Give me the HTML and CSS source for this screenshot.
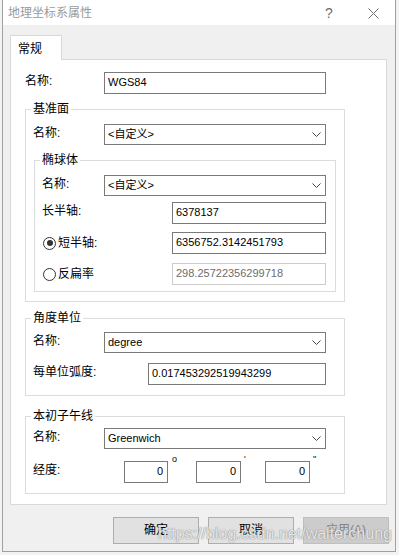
FILE: index.html
```html
<!DOCTYPE html>
<html lang="zh-CN">
<head>
    <meta charset="UTF-8">
    <title>地理坐标系属性</title>
    <link rel="stylesheet" href="styles.css">
</head>
<body>
    <div class="dialog">
        <!-- Title bar -->
        <div class="titlebar">
            <span class="title">地理坐标系属性</span>
            <span class="help">?</span>
            <span class="close">
                <svg width="11" height="11" viewBox="0 0 11 11"><path d="M0.5 0.5 L10.5 10.5 M10.5 0.5 L0.5 10.5" stroke="#6e6e6e" stroke-width="1" fill="none"/></svg>
            </span>
        </div>

        <div class="content">
            <div class="tabs">
                <div class="tab">常规</div>
            </div>

            <div class="page">
                <div class="row name-row">
                    <span class="lbl">名称:</span>
                    <div class="textbox wide">WGS84</div>
                </div>

                <!-- 基准面 -->
                <fieldset class="group datum">
                    <legend>基准面</legend>
                    <div class="row">
                        <span class="lbl">名称:</span>
                        <div class="combo"><span>&lt;自定义&gt;</span><svg width="9" height="5" viewBox="0 0 9 5"><path d="M0.5 0.5 L4.5 4.5 L8.5 0.5" stroke="#444" fill="none"/></svg></div>
                    </div>

                    <fieldset class="group sphere">
                        <legend>椭球体</legend>
                        <div class="row">
                            <span class="lbl">名称:</span>
                            <div class="combo"><span>&lt;自定义&gt;</span><svg width="9" height="5" viewBox="0 0 9 5"><path d="M0.5 0.5 L4.5 4.5 L8.5 0.5" stroke="#444" fill="none"/></svg></div>
                        </div>
                        <div class="row major-row">
                            <span class="lbl">长半轴:</span>
                            <div class="textbox axis">6378137</div>
                        </div>
                        <div class="row radio-row minor-row">
                            <span class="opt"><span class="radio checked"></span>短半轴:</span>
                            <div class="textbox axis">6356752.3142451793</div>
                        </div>
                        <div class="row radio-row flat-row">
                            <span class="opt"><span class="radio"></span>反扁率</span>
                            <div class="textbox axis disabled">298.25722356299718</div>
                        </div>
                    </fieldset>
                </fieldset>

                <!-- 角度单位 -->
                <fieldset class="group unit">
                    <legend>角度单位</legend>
                    <div class="row">
                        <span class="lbl">名称:</span>
                        <div class="combo"><span>degree</span><svg width="9" height="5" viewBox="0 0 9 5"><path d="M0.5 0.5 L4.5 4.5 L8.5 0.5" stroke="#444" fill="none"/></svg></div>
                    </div>
                    <div class="row radian-row">
                        <span class="lbl">每单位弧度:</span>
                        <div class="textbox radian">0.017453292519943299</div>
                    </div>
                </fieldset>

                <!-- 本初子午线 -->
                <fieldset class="group meridian">
                    <legend>本初子午线</legend>
                    <div class="row">
                        <span class="lbl">名称:</span>
                        <div class="combo"><span>Greenwich</span><svg width="9" height="5" viewBox="0 0 9 5"><path d="M0.5 0.5 L4.5 4.5 L8.5 0.5" stroke="#444" fill="none"/></svg></div>
                    </div>
                    <div class="row lon-row">
                        <span class="lbl">经度:</span>
                        <div class="textbox num deg">0</div><span class="mark deg-mark">o</span>
                        <div class="textbox num">0</div><span class="mark min-mark">'</span>
                        <div class="textbox num">0</div><span class="mark">"</span>
                    </div>
                </fieldset>
            </div>

            <div class="buttons">
                <div class="btn">确定</div>
                <div class="btn">取消</div>
                <div class="btn disabled">应用(A)</div>
            </div>
        </div>

        <div class="watermark">https://blog.csdn.net/walterchung</div>
    </div>
</body>
</html>
```

FILE: styles.css
```css
* {
    box-sizing: border-box;
}

body {
    margin: 0;
    background: #f3f3f3;
    font-family: "Liberation Sans", "Noto Sans CJK SC", sans-serif;
    font-size: 12px;
    color: #000;
}

/* Dialog window */
.dialog {
    position: relative;
    width: 394px;
    height: 552px;
    margin-left: 2px;
    background: #f0f0f0;
    border: 1px solid #a0a0a0;
    border-top: none;
}

.titlebar {
    height: 25px;
    background: #fff;
    display: flex;
    align-items: center;
}

.title {
    padding-left: 5px;
    color: #9a9a9a;
    line-height: 16px;
}

.help {
    margin-left: auto;
    width: 8px;
    color: #6e6e6e;
    font-size: 14px;
    line-height: 16px;
}

.close {
    display: flex;
    margin: 1px 16px 0 35px;
}

.content {
    padding: 10px 0 0 7px;
}

/* Tab */
.tab {
    position: relative;
    z-index: 1;
    width: 52px;
    height: 25px;
    margin-bottom: -1px;
    padding: 5px 0 0 7px;
    background: #fff;
    border: 1px solid #d9d9d9;
    border-bottom: none;
    line-height: 16px;
}

.page {
    width: 377px;
    height: 446px;
    padding: 12px 0 0 14px;
    background: #fff;
    border: 1px solid #d9d9d9;
}

/* Rows */
.row {
    display: flex;
    align-items: flex-start;
}

.lbl {
    flex: none;
    padding-top: 1px;
    line-height: 16px;
}

.name-row .lbl {
    width: 79px;
}

.textbox {
    height: 22px;
    padding: 0 3px;
    background: #fff;
    border: 1px solid #7a7a7a;
    font-size: 11px;
    line-height: 19px;
    white-space: nowrap;
}

.textbox.wide {
    width: 222px;
}

.textbox.disabled {
    border-color: #cccccc;
    color: #6d6d6d;
}

.combo {
    width: 222px;
    height: 21px;
    padding: 1px 0 0 3px;
    display: flex;
    align-items: flex-start;
    justify-content: space-between;
    background: #fff;
    border: 1px solid #7a7a7a;
    font-size: 11px;
    line-height: 16px;
}

.combo svg {
    margin: 6px 4px 0 0;
}

/* Group boxes */
.group {
    margin: 0;
    min-width: 0;
    border: 1px solid #dcdcdc;
}

.group legend {
    margin-left: -2px;
    padding: 0 2px;
    line-height: 16px;
}

.datum {
    width: 320px;
    margin-top: 7px;
    padding: 7px 0 9px 7px;
}

.datum > .row .lbl,
.unit > .row .lbl,
.meridian > .row .lbl {
    width: 71px;
}

.sphere {
    width: 302px;
    margin: 7px 0 0 1px;
    padding: 7px 0 6px 7px;
}

.sphere .lbl {
    width: 62px;
}

.sphere .major-row {
    margin-top: 6px;
}

.sphere .major-row .lbl {
    width: 130px;
}

.textbox.axis {
    width: 154px;
}

.radio-row {
    align-items: center;
}

.minor-row {
    margin-top: 8px;
}

.flat-row {
    margin-top: 9px;
}

.opt {
    width: 130px;
    display: flex;
    align-items: center;
    gap: 2px;
    padding-left: 1px;
    line-height: 16px;
}

.radio {
    position: relative;
    width: 13px;
    height: 13px;
    border: 1px solid #333;
    border-radius: 50%;
    background: #fff;
}

.radio.checked::after {
    content: "";
    position: absolute;
    left: 2.5px;
    top: 2.5px;
    width: 6px;
    height: 6px;
    border-radius: 50%;
    background: #333;
}

.unit {
    width: 320px;
    margin-top: 8px;
    padding: 6px 0 10px 7px;
}

.radian-row {
    margin-top: 10px;
}

.radian-row .lbl {
    width: 115px !important;
}

.textbox.radian {
    width: 178px;
}

.meridian {
    width: 320px;
    margin-top: 12px;
    padding: 4px 0 10px 7px;
}

.lon-row {
    margin-top: 12px;
}

.lon-row .lbl {
    width: 91px !important;
}

.textbox.num {
    width: 45px;
    padding-right: 4px;
    text-align: right;
}

.textbox.num.deg {
    width: 44px;
}

.mark {
    margin-top: -6px;
    padding-left: 3px;
    width: 24px;
    font-size: 9px;
    line-height: 9px;
}

.mark.deg-mark {
    width: 28px;
    padding-left: 4px;
}

/* Buttons */
.buttons {
    display: flex;
    gap: 9px;
    margin: 12px 0 0 103px;
}

.btn {
    width: 86px;
    height: 27px;
    background: #e1e1e1;
    border: 1px solid #adadad;
    text-align: center;
    line-height: 25px;
}

.btn.disabled {
    background: #cccccc;
    border-color: #bfbfbf;
    color: #838383;
}

/* csdn watermark over the buttons */
.watermark {
    position: absolute;
    left: 155px;
    top: 525px;
    font-size: 16px;
    line-height: 18px;
    color: rgba(255, 255, 255, 0.8);
    text-shadow: 0 0 1px #8a8a8a, 0 0 1px #8a8a8a;
    white-space: nowrap;
}
```
